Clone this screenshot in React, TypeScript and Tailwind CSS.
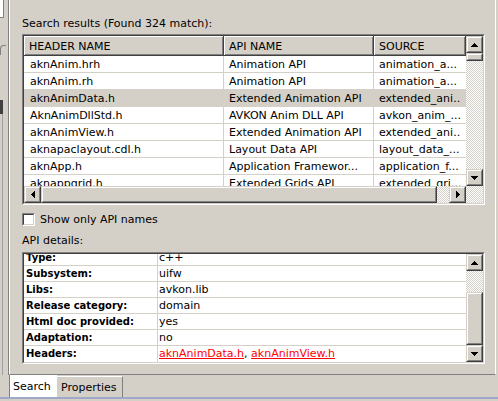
const rows = [
  ["aknAnim.hrh", "Animation API", "animation_a..."],
  ["aknAnim.rh", "Animation API", "animation_a..."],
  ["aknAnimData.h", "Extended Animation API", "extended_ani.."],
  ["AknAnimDllStd.h", "AVKON Anim DLL API", "avkon_anim_..."],
  ["aknAnimView.h", "Extended Animation API", "extended_ani.."],
  ["aknapaclayout.cdl.h", "Layout Data API", "layout_data_..."],
  ["aknApp.h", "Application Framewor...", "application_f..."],
  ["aknappgrid.h", "Extended Grids API", "extended_gri..."],
];

const details = [
  ["Type:", "c++"],
  ["Subsystem:", "uifw"],
  ["Libs:", "avkon.lib"],
  ["Release category:", "domain"],
  ["Html doc provided:", "yes"],
  ["Adaptation:", "no"],
];

const Arrow = ({ dir }: { dir: "up" | "down" | "left" | "right" }) => {
  const pts = {
    up: "3.5,0 7,4 0,4",
    down: "0,0 7,0 3.5,4",
    left: "4,0 4,7 0,3.5",
    right: "0,0 4,3.5 0,7",
  }[dir];
  const vertical = dir === "up" || dir === "down";
  return (
    <svg width={vertical ? 7 : 4} height={vertical ? 4 : 7} viewBox={vertical ? "0 0 7 4" : "0 0 4 7"}>
      <polygon points={pts} fill="#000" shapeRendering="crispEdges" />
    </svg>
  );
};

// raised 3d box used for scroll buttons and thumbs
const Raised = ({ className = "", children }: { className?: string; children?: React.ReactNode }) => (
  <div className={`border border-t-[#d4d0c8] border-l-[#d4d0c8] border-b-[#404040] border-r-[#404040] bg-[#d4d0c8] ${className}`}>
    <div className="w-full h-full border border-t-white border-l-white border-b-[#808080] border-r-[#808080] flex items-center justify-center">
      {children}
    </div>
  </div>
);

const Track = ({ className = "" }: { className?: string }) => (
  <div className={`bg-[repeating-conic-gradient(#d4d0c8_0%_25%,#ffffff_0%_50%)] bg-[length:2px_2px] ${className}`} />
);

const Sunken = ({ className = "", children }: { className?: string; children?: React.ReactNode }) => (
  <div className={`border border-t-[#808080] border-l-[#808080] border-r-white border-b-white ${className}`}>
    <div className="w-full h-full border border-t-[#404040] border-l-[#404040] border-r-[#d4d0c8] border-b-[#d4d0c8] bg-white overflow-hidden">
      {children}
    </div>
  </div>
);

const headerCell = "h-[20px] pl-[5px] leading-[21px] border-r border-b border-[#404040] bg-[#d4d0c8] shadow-[inset_1px_1px_0_#ffffff,inset_-1px_-1px_0_#808080] whitespace-nowrap overflow-hidden";

export default function App() {
  return (
    <div className="w-[498px] h-[401px] bg-[#d4d0c8] flex flex-col overflow-hidden font-['DejaVu_Sans',sans-serif] text-[11px] text-black">
      <div className="flex h-[375px]">
        {/* neighbouring view edge */}
        <div className="w-[9px] border-r border-[#808080] flex flex-col">
          <div className="w-[4px] h-[18px] bg-white border-r border-b border-[#808080]" />
          <div className="mt-[27px] w-[6px] h-[10px] border-l border-t border-[#808080] rounded-tl-[4px]" />
          <div className="mt-[45px] w-[3px] h-[14px] bg-[#404040]" />
          <div className="flex-1 w-[3px] border-r border-[#a0a0a0]" />
        </div>

        <div className="w-[487px] border-l border-l-white border-r border-r-white border-b border-b-[#808080] pl-[12px] flex flex-col">
          <div className="mt-[17px] h-[14px] leading-[14px]">Search results (Found 324 match):</div>

          <Sunken className="mt-[3px] w-[463px] h-[171px]">
            <div className="flex h-[150px]">
              <div className="w-[442px] overflow-hidden">
                <div className="flex">
                  <div className={`w-[200px] ${headerCell}`}>HEADER NAME</div>
                  <div className={`w-[150px] ${headerCell}`}>API NAME</div>
                  <div className={`w-[92px] ${headerCell}`}>SOURCE</div>
                </div>
                {rows.map((r, i) => (
                  <div key={r[0]} className={`flex h-[17px] border-b border-[#d4d0c8] ${i === 2 ? "bg-[#d4d0c8]" : ""}`}>
                    <div className="w-[200px] pl-[6px] pt-[1px] leading-[15px] border-r border-[#d4d0c8] whitespace-nowrap overflow-hidden">{r[0]}</div>
                    <div className="w-[150px] pl-[5px] pt-[1px] leading-[15px] border-r border-[#d4d0c8] whitespace-nowrap overflow-hidden">{r[1]}</div>
                    <div className="w-[92px] pl-[5px] pt-[1px] leading-[15px] whitespace-nowrap overflow-hidden">{r[2]}</div>
                  </div>
                ))}
              </div>
              <div className="w-[17px] flex flex-col">
                <Raised className="h-[17px]"><Arrow dir="up" /></Raised>
                <Raised className="h-[8px]" />
                <Track className="flex-1" />
                <Raised className="h-[17px]"><Arrow dir="down" /></Raised>
              </div>
            </div>
            <div className="flex h-[17px]">
              <Raised className="w-[17px]"><Arrow dir="left" /></Raised>
              <Raised className="w-[396px]" />
              <Track className="w-[12px]" />
              <Raised className="w-[17px]"><Arrow dir="right" /></Raised>
              <Track className="w-[17px]" />
            </div>
          </Sunken>

          <div className="mt-[8px] h-[13px] flex items-center gap-[5px]">
            <Sunken className="w-[13px] h-[13px]" />
            <span className="leading-[13px]">Show only API names</span>
          </div>

          <div className="mt-[8px] h-[14px] leading-[14px]">API details:</div>

          <Sunken className="mt-[4px] w-[463px] h-[112px]">
            <div className="flex h-full">
              <div className="w-[442px] overflow-hidden">
                <div className="-mt-[4px]">
                  {details.map((d) => (
                    <div key={d[0]} className="flex h-[16px] border-b border-[#d4d0c8]">
                      <div className="w-[134px] pl-[2px] pt-[1px] leading-[14px] font-bold text-[10px] border-r border-[#d4d0c8] whitespace-nowrap">{d[0]}</div>
                      <div className="flex-1 pl-[1px] pt-[1px] leading-[14px] whitespace-nowrap">{d[1]}</div>
                    </div>
                  ))}
                  <div className="flex h-[16px]">
                    <div className="w-[134px] pl-[2px] pt-[1px] leading-[14px] font-bold text-[10px] border-r border-[#d4d0c8] whitespace-nowrap">Headers:</div>
                    <div className="flex-1 pl-[1px] pt-[1px] leading-[14px] whitespace-nowrap">
                      <span className="text-[#ff0000] underline">aknAnimData.h</span>, <span className="text-[#ff0000] underline">aknAnimView.h</span>
                    </div>
                  </div>
                </div>
              </div>
              <div className="w-[17px] flex flex-col">
                <Raised className="h-[17px]"><Arrow dir="up" /></Raised>
                <Track className="h-[21px]" />
                <Raised className="flex-1" />
                <Raised className="h-[17px]"><Arrow dir="down" /></Raised>
              </div>
            </div>
          </Sunken>
        </div>
      </div>

      {/* view tabs */}
      <div className="flex h-[22px]">
        <div className="w-[10px] border-r border-[#808080]" />
        <div className="w-[47px] bg-white pl-[3px] leading-[23px]">Search</div>
        <div className="mt-[1px] w-[66px] border-t border-white border-r border-r-[#808080] pl-[4px] leading-[21px]">Properties</div>
      </div>
      <div className="h-[2px] bg-[#a0a8c8]" />
      <div className="h-[2px]" />
    </div>
  );
}
